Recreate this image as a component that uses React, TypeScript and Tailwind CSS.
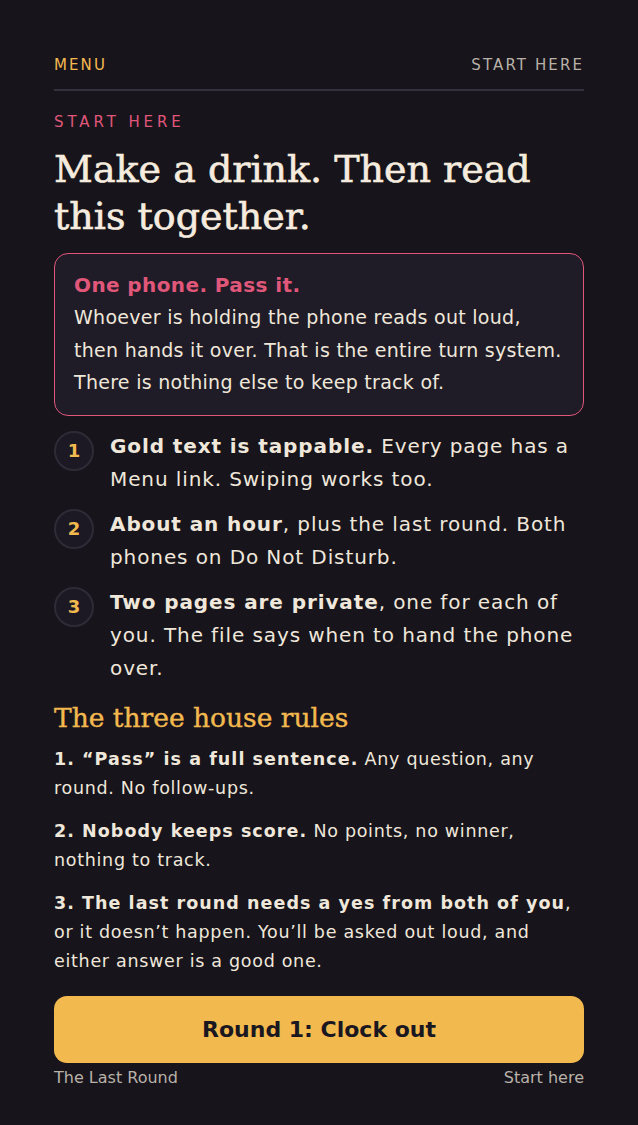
export default function App() {
  const sans = { fontFamily: '"DejaVu Sans", sans-serif' };
  const serif = { fontFamily: '"DejaVu Serif", serif' };
  return (
    <div className="min-h-[1125px] w-full bg-[#17141c] text-[#f3ebdd]" style={sans}>
      <div className="px-[54px] pt-[54px] pb-10">
        <header className="flex items-center justify-between border-b-2 border-[#34313d] pb-[12px]">
          <span className="text-[15px] tracking-[0.14em] text-[#f2b94f]">MENU</span>
          <span className="text-[15px] tracking-[0.14em] text-[#b9b1a8]">START HERE</span>
        </header>

        <p className="mt-[20px] text-[15px] tracking-[0.26em] text-[#e0577a]">START HERE</p>
        <h1
          className="mt-[13px] text-[38px] leading-[47px] text-[#f5ecdf] [-webkit-text-stroke:0.6px_#f5ecdf]"
          style={serif}
        >
          Make a drink. Then read this together.
        </h1>

        <section className="mt-[13px] rounded-[14px] border-[1.5px] border-[#e0577a] bg-[#1f1c27] pl-[19px] pr-[12px] pt-[17px] pb-[16px]">
          <h2 className="text-[20px] font-bold leading-[28px] tracking-[0.02em] text-[#e0577a]">One phone. Pass it.</h2>
          <p className="mt-[2px] text-[19px] leading-[32.5px] tracking-[0.015em] text-[#efe7da]">
            Whoever is holding the phone reads out loud, then hands it over. That is the entire turn system. There is nothing else to keep track of.
          </p>
        </section>

        <ol className="mt-[14px] flex flex-col gap-[12px]">
          {[
            { n: '1', b: 'Gold text is tappable.', r: ' Every page has a Menu link. Swiping works too.' },
            { n: '2', b: 'About an hour', r: ', plus the last round. Both phones on Do Not Disturb.' },
            { n: '3', b: 'Two pages are private', r: ', one for each of you. The file says when to hand the phone over.' },
          ].map((it) => (
            <li key={it.n} className="flex items-start gap-[16px]">
              <span className="mt-[1px] flex h-[40px] w-[40px] shrink-0 items-center justify-center rounded-full border-2 border-[#2e2b37] bg-[#1c1924] text-[18px] font-bold text-[#f2b94f]">
                {it.n}
              </span>
              <p className="text-[20px] leading-[33px] tracking-[0.045em] text-[#efe7da]">
                <strong className="font-bold">{it.b}</strong>
                {it.r}
              </p>
            </li>
          ))}
        </ol>

        <h3
          className="mt-[16px] text-[26.5px] leading-[34px] text-[#f2b94f] [-webkit-text-stroke:0.4px_#f2b94f]"
          style={serif}
        >
          The three house rules
        </h3>
        <div className="mt-[10px] flex flex-col gap-[14px] text-[17.5px] leading-[29px] tracking-[0.04em] text-[#efe7da]">
          <p>
            <strong className="font-bold tracking-[0.06em]">1. “Pass” is a full sentence.</strong> Any question, any round. No follow-ups.
          </p>
          <p>
            <strong className="font-bold tracking-[0.06em]">2. Nobody keeps score.</strong> No points, no winner, nothing to track.
          </p>
          <p>
            <strong className="font-bold tracking-[0.06em]">3. The last round needs a yes from both of you</strong>, or it doesn’t happen. You’ll be asked out loud, and either answer is a good one.
          </p>
        </div>

        <button className="mt-[20px] flex h-[67px] w-full items-center justify-center rounded-[13px] bg-[#f2b94f] text-[22px] font-bold text-[#1b1720]">
          Round 1: Clock out
        </button>
        <div className="mt-[3px] flex justify-between text-[16px] text-[#b9b1a8]">
          <span>The Last Round</span>
          <span>Start here</span>
        </div>
      </div>
    </div>
  );
}
